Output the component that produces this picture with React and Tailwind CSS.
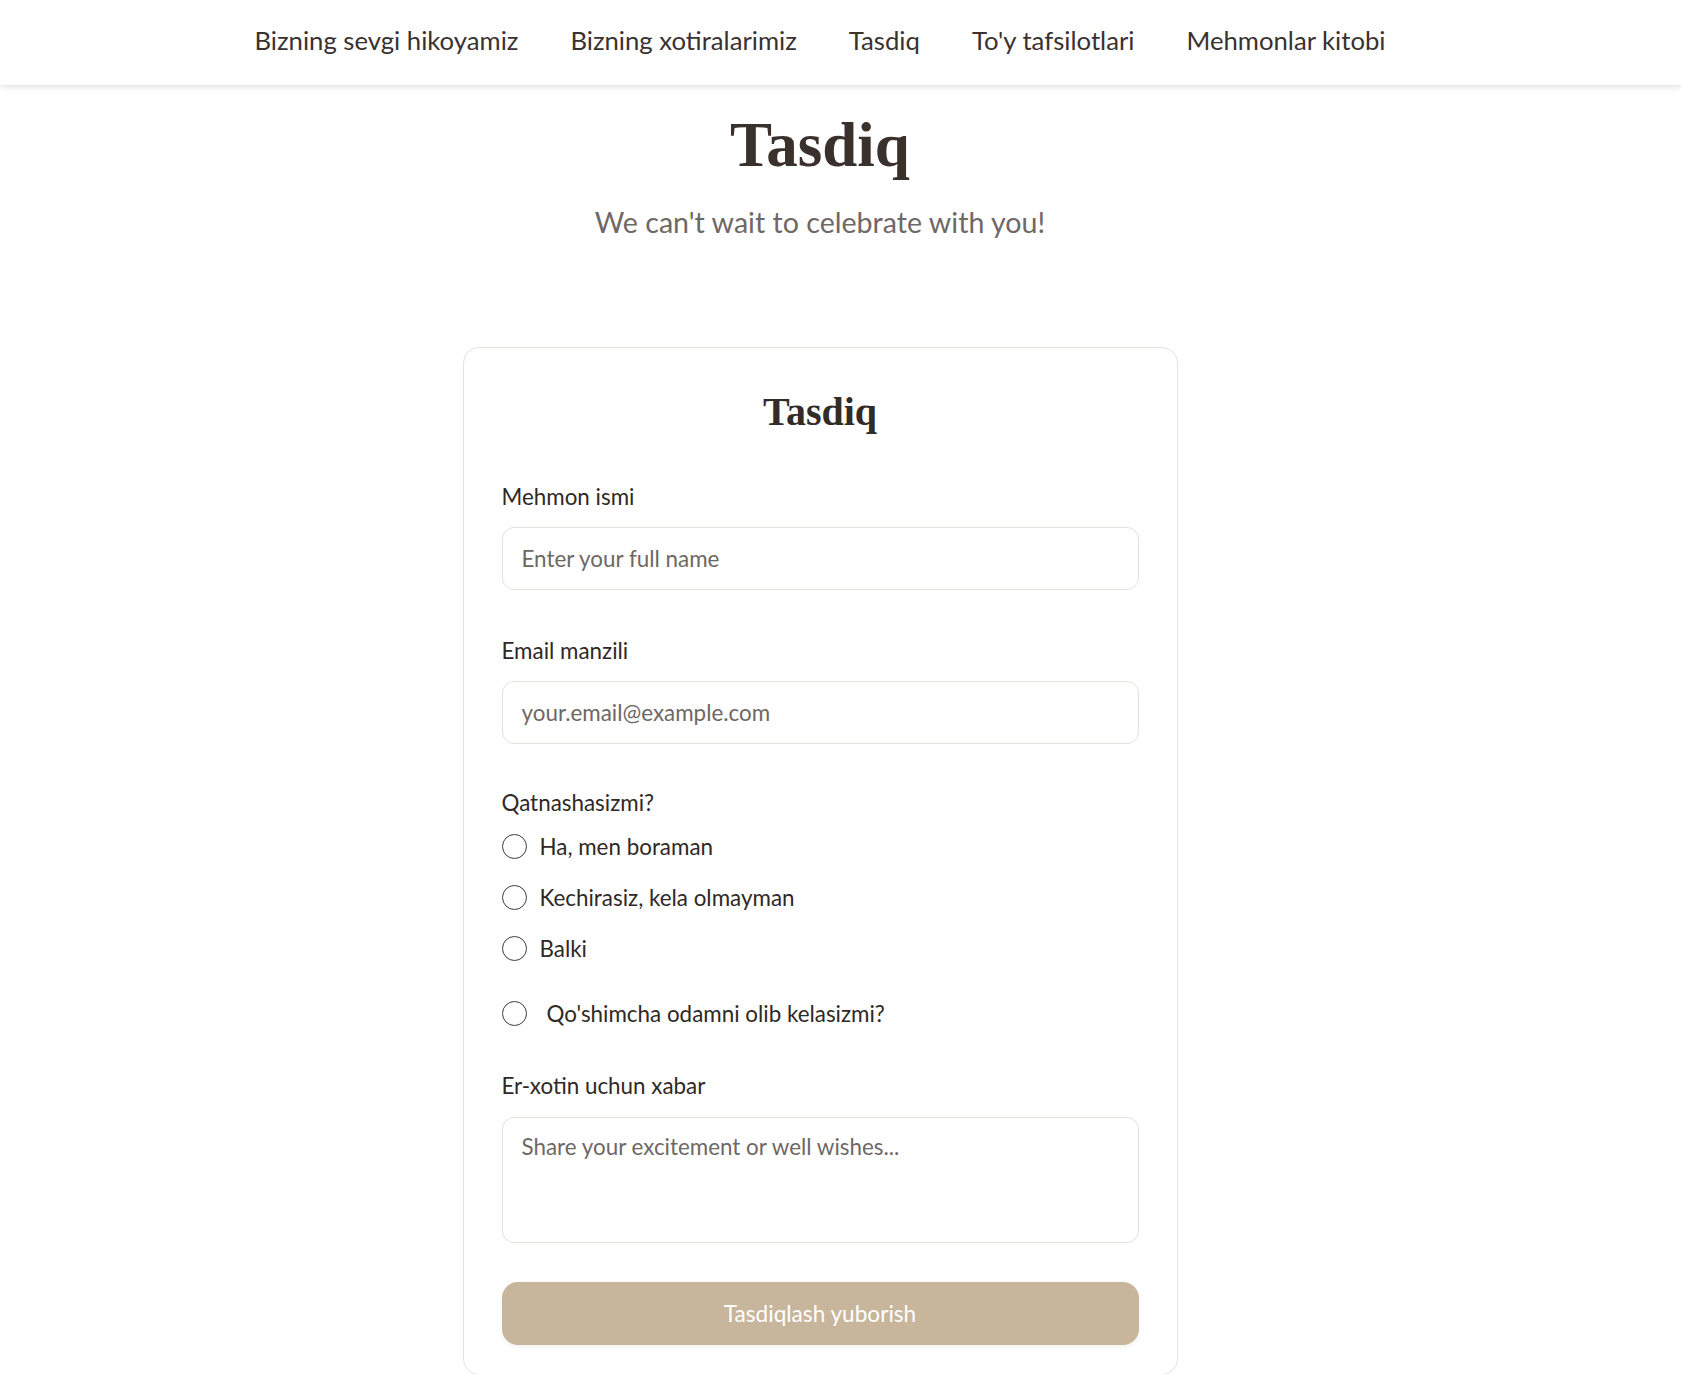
import { useState } from "react";

const links = ["Bizning sevgi hikoyamiz", "Bizning xotiralarimiz", "Tasdiq", "To'y tafsilotlari", "Mehmonlar kitobi"];
const options = ["Ha, men boraman", "Kechirasiz, kela olmayman", "Balki"];

const serif = { fontFamily: '"Liberation Serif", "DejaVu Serif", serif' };

export default function App() {
  const [attend, setAttend] = useState("");
  const [plusOne, setPlusOne] = useState(false);

  return (
    <div className="min-h-screen bg-white text-[#2f2926]" style={{ fontFamily: 'Lato, "Noto Sans", sans-serif' }}>
      <nav className="h-[85px] bg-white shadow-[0_2px_6px_rgba(0,0,0,0.12)] relative z-10">
        <ul className="w-[1640px] h-full flex items-center justify-center gap-[52px] pb-[4px]">
          {links.map(l => (
            <li key={l}>
              <a href="#" className="text-[25.7px] text-[#3a3230]">{l}</a>
            </li>
          ))}
        </ul>
      </nav>

      <main className="w-[1640px] flex flex-col items-center">
        <h1 className="mt-[29px] text-[63px] leading-none font-bold text-[#3a302c]" style={serif}>Tasdiq</h1>
        <p className="mt-[24px] text-[28.6px] leading-[42px] text-[#6f6866]">We can't wait to celebrate with you!</p>

        <form className="mt-[104px] w-[715px] border border-[#e6e2de] rounded-2xl px-[38px] pt-[44px] pb-[29px] flex flex-col" onSubmit={e => e.preventDefault()}>
          <h2 className="text-[40px] leading-none font-bold text-center text-[#332b28]" style={serif}>Tasdiq</h2>

          <label className="mt-[48px] text-[22.4px] leading-[33px]">Mehmon ismi</label>
          <input placeholder="Enter your full name" className="mt-[14px] h-[63px] rounded-xl border border-[#e4e0dc] px-[19px] text-[22.4px] placeholder-[#6e6864] outline-none" />

          <label className="mt-[44px] text-[22.4px] leading-[33px]">Email manzili</label>
          <input placeholder="your.email@example.com" className="mt-[14px] h-[63px] rounded-xl border border-[#e4e0dc] px-[19px] text-[22.4px] placeholder-[#6e6864] outline-none" />

          <label className="mt-[42px] text-[22.4px] leading-[33px]">Qatnashasizmi?</label>
          <div className="mt-[11px] flex flex-col gap-[18px]">
            {options.map(o => (
              <label key={o} className="h-[33px] flex items-center gap-[13px] text-[22.4px] cursor-pointer">
                <input type="radio" name="attend" checked={attend === o} onChange={() => setAttend(o)} className="appearance-none w-[25px] h-[25px] rounded-full border border-[#3c3c3c] checked:border-[7px] checked:border-[#c8b69c]" />
                {o}
              </label>
            ))}
          </div>

          <label className="mt-[32px] h-[33px] flex items-center gap-[20px] text-[22.4px] cursor-pointer">
            <input type="checkbox" checked={plusOne} onChange={e => setPlusOne(e.target.checked)} className="appearance-none w-[25px] h-[25px] rounded-full border border-[#3c3c3c] checked:bg-[#c8b69c]" />
            Qo'shimcha odamni olib kelasizmi?
          </label>

          <label className="mt-[39px] text-[22.4px] leading-[33px]">Er-xotin uchun xabar</label>
          <textarea placeholder="Share your excitement or well wishes..." className="mt-[15px] h-[126px] rounded-xl border border-[#e4e0dc] px-[19px] py-[12px] text-[22.4px] placeholder-[#6e6864] outline-none resize-none" />

          <button type="submit" className="mt-[39px] h-[63px] rounded-2xl bg-[#c8b69c] text-white text-[22.6px] shadow-[0_2px_4px_rgba(0,0,0,0.06)]">Tasdiqlash yuborish</button>
        </form>
      </main>
    </div>
  );
}
